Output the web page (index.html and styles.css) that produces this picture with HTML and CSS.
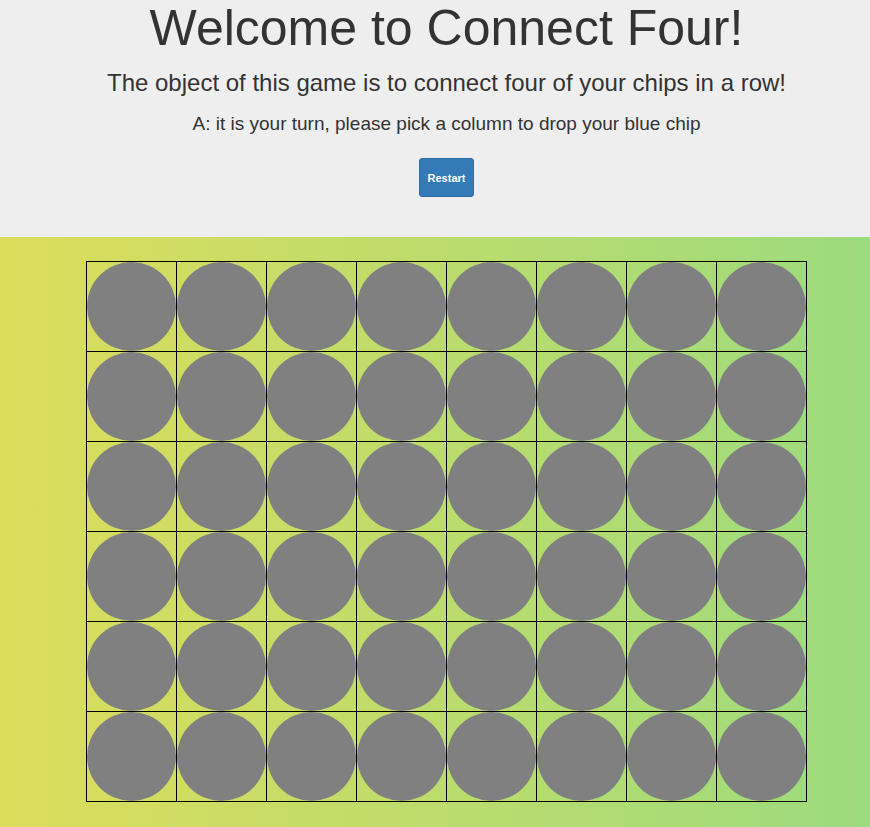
FILE: index.html
```html
<!DOCTYPE html>
<html>
<head>
<meta charset="utf-8">
<title>Connect Four</title>
<link rel="stylesheet" href="styles.css">
</head>
<body>
<header class="top">
  <h1 class="title">Welcome to Connect Four!</h1>
  <h2 class="subtitle">The object of this game is to connect four of your chips in a row!</h2>
  <p class="turn">A: it is your turn, please pick a column to drop your blue chip</p>
  <button class="btn-restart">Restart</button>
</header>
<main class="field">
  <table class="board">
    <tbody>
      <tr><td><div class="chip"></div></td><td><div class="chip"></div></td><td><div class="chip"></div></td><td><div class="chip"></div></td><td><div class="chip"></div></td><td><div class="chip"></div></td><td><div class="chip"></div></td><td><div class="chip"></div></td></tr>
      <tr><td><div class="chip"></div></td><td><div class="chip"></div></td><td><div class="chip"></div></td><td><div class="chip"></div></td><td><div class="chip"></div></td><td><div class="chip"></div></td><td><div class="chip"></div></td><td><div class="chip"></div></td></tr>
      <tr><td><div class="chip"></div></td><td><div class="chip"></div></td><td><div class="chip"></div></td><td><div class="chip"></div></td><td><div class="chip"></div></td><td><div class="chip"></div></td><td><div class="chip"></div></td><td><div class="chip"></div></td></tr>
      <tr><td><div class="chip"></div></td><td><div class="chip"></div></td><td><div class="chip"></div></td><td><div class="chip"></div></td><td><div class="chip"></div></td><td><div class="chip"></div></td><td><div class="chip"></div></td><td><div class="chip"></div></td></tr>
      <tr><td><div class="chip"></div></td><td><div class="chip"></div></td><td><div class="chip"></div></td><td><div class="chip"></div></td><td><div class="chip"></div></td><td><div class="chip"></div></td><td><div class="chip"></div></td><td><div class="chip"></div></td></tr>
      <tr><td><div class="chip"></div></td><td><div class="chip"></div></td><td><div class="chip"></div></td><td><div class="chip"></div></td><td><div class="chip"></div></td><td><div class="chip"></div></td><td><div class="chip"></div></td><td><div class="chip"></div></td></tr>
    </tbody>
  </table>
</main>
</body>
</html>
```

FILE: styles.css
```css
html, body {
  margin: 0;
  padding: 0;
}
body {
  font-family: "Liberation Sans", Arial, Helvetica, sans-serif;
  color: #333333;
  background: #eeeeee;
}
.top {
  background: #eeeeee;
  text-align: center;
  padding: 0 0 40px 23px;
}
.title {
  margin: 0;
  font-size: 50px;
  line-height: 56px;
  font-weight: normal;
}
.subtitle {
  margin: 12px 0 0 0;
  font-size: 24px;
  line-height: 30px;
  font-weight: normal;
}
.turn {
  margin: 14px 0 0 0;
  font-size: 19px;
  line-height: 24px;
}
.btn-restart {
  display: inline-block;
  margin-top: 22px;
  height: 39px;
  padding: 0 8px;
  font-family: "Liberation Sans", Arial, sans-serif;
  font-size: 11px;
  font-weight: bold;
  color: #ffffff;
  background: #337ab7;
  border: 1px solid #2e6da4;
  border-radius: 3px;
  vertical-align: top;
}
.field {
  background: linear-gradient(to right, #dddd5b, #9cdb7e);
  padding: 24px 0 40px 86px;
}
.board {
  border-collapse: collapse;
  border: 1px solid #000000;
}
.board td {
  border: 1px solid #000000;
  padding: 0;
}
.chip {
  width: 89px;
  height: 89px;
  border-radius: 50%;
  background: #808080;
}
```
